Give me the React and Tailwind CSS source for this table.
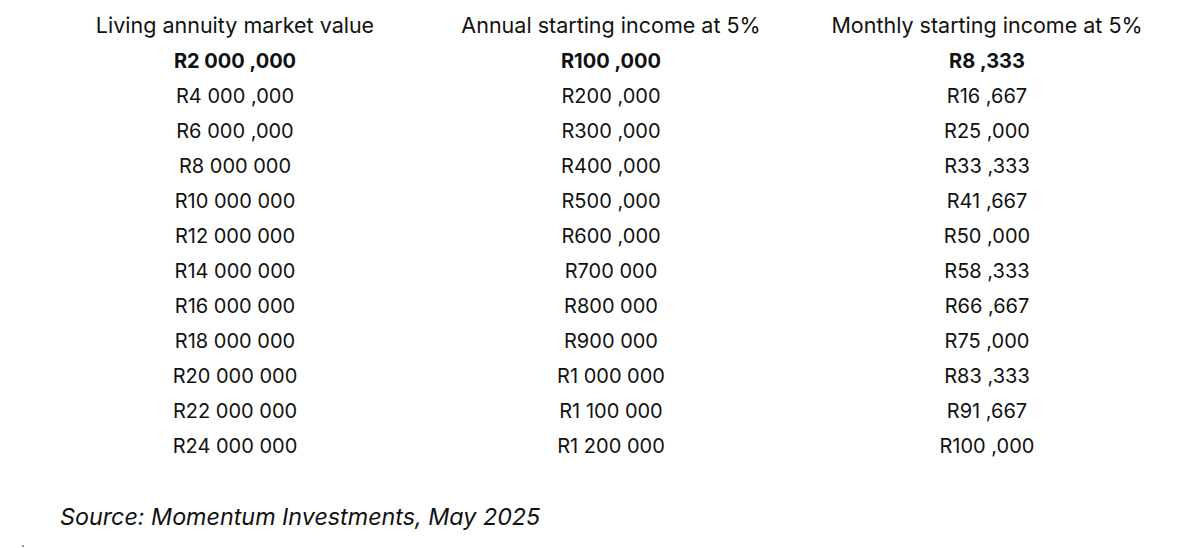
const rows = [
  ["R2 000 ,000", "R100 ,000", "R8 ,333"],
  ["R4 000 ,000", "R200 ,000", "R16 ,667"],
  ["R6 000 ,000", "R300 ,000", "R25 ,000"],
  ["R8 000 000", "R400 ,000", "R33 ,333"],
  ["R10 000 000", "R500 ,000", "R41 ,667"],
  ["R12 000 000", "R600 ,000", "R50 ,000"],
  ["R14 000 000", "R700 000", "R58 ,333"],
  ["R16 000 000", "R800 000", "R66 ,667"],
  ["R18 000 000", "R900 000", "R75 ,000"],
  ["R20 000 000", "R1 000 000", "R83 ,333"],
  ["R22 000 000", "R1 100 000", "R91 ,667"],
  ["R24 000 000", "R1 200 000", "R100 ,000"],
]

const headers = [
  "Living annuity market value",
  "Annual starting income at 5%",
  "Monthly starting income at 5%",
]

export default function App() {
  return (
    <div className="w-[1200px] h-[548px] bg-white text-[#111] font-['Inter',sans-serif] relative">
      <div className="pt-[8px] pl-[47px] grid grid-cols-[376px_376px_376px]">
        {headers.map((h) => (
          <div key={h} className="h-[35px] flex items-center justify-center text-[21.5px]">
            {h}
          </div>
        ))}
        {rows.map((row, i) =>
          row.map((cell, j) => (
            <div
              key={i + "-" + j}
              className={
                "h-[35px] flex items-center justify-center text-[20px] " +
                (i === 0 ? "font-bold" : "")
              }
            >
              {cell}
            </div>
          ))
        )}
      </div>
      <div className="pl-[60px] pt-[37px] italic text-[23.3px]">
        Source: Momentum Investments, May 2025
      </div>
      <div className="absolute left-[22px] top-[545px] w-[2px] h-[2px] bg-[#999]" />
    </div>
  )
}
